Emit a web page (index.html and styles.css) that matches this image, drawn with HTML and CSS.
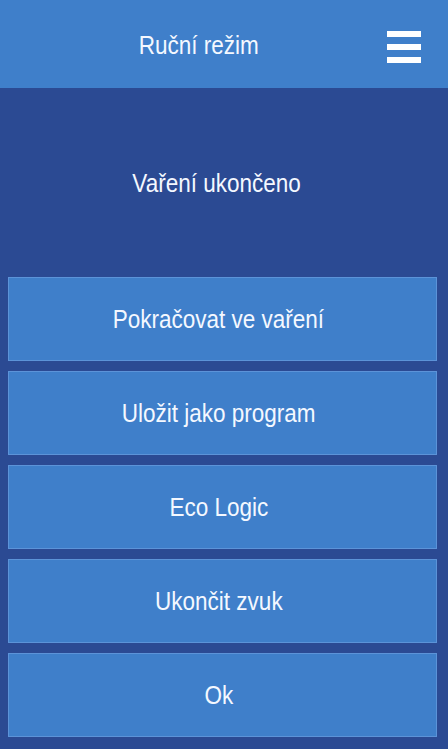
FILE: index.html
```html
<!DOCTYPE html>
<html lang="cs">
<head>
  <meta charset="UTF-8" />
  <meta name="viewport" content="width=device-width, initial-scale=1.0"/>
  <title>Ruční režim</title>
  <link rel="stylesheet" href="styles.css">
</head>
<body>

  <div class="screen">
    <div class="top-bar">
      <div class="top-title"><span class="label">Ruční režim</span></div>
      <div class="menu-btn">
        <span></span>
        <span></span>
        <span></span>
      </div>
    </div>

    <div class="status"><span class="label">Vaření ukončeno</span></div>

    <div class="actions">
      <button class="action"><span class="label">Pokračovat ve vaření</span></button>
      <button class="action"><span class="label">Uložit jako program</span></button>
      <button class="action"><span class="label">Eco Logic</span></button>
      <button class="action"><span class="label">Ukončit zvuk</span></button>
      <button class="action"><span class="label">Ok</span></button>
    </div>
  </div>

</body>
</html>
```

FILE: styles.css
```css
body {
  margin: 0;
  padding: 0;
  background: #2b4a93;
  font-family: 'Liberation Sans', Arial, sans-serif;
  color: #ffffff;
}

.screen {
  width: 448px;
  height: 749px;
  display: flex;
  flex-direction: column;
  background: #2b4a93;
}

/* text in the original is a bit tall and narrow */
.label {
  display: inline-block;
  font-size: 25px;
  transform: scaleX(0.9);
  color: #f4f8ff;
}

.top-bar {
  height: 88px;
  background: #3f7fca;
  display: flex;
  align-items: center;
  justify-content: center;
  position: relative;
}

.top-title {
  margin-right: 50px;
  padding-top: 3px;
}

.menu-btn {
  position: absolute;
  right: 27px;
  top: 31px;
  width: 34px;
  display: flex;
  flex-direction: column;
  gap: 7px;
}

.menu-btn span {
  display: block;
  height: 6px;
  background: #ffffff;
}

.status {
  flex: 1;
  display: flex;
  align-items: center;
  justify-content: center;
  padding: 2px 14px 0 0;
}

.actions {
  display: flex;
  flex-direction: column;
  gap: 10px;
  margin: 0 11px 12px 8px;
}

.action {
  height: 84px;
  background: #3f7fca;
  border: 1px solid #5c93d8;
  color: #ffffff;
  font-family: 'Liberation Sans', Arial, sans-serif;
  padding: 0 8px 0 0;
  cursor: pointer;
}
```
